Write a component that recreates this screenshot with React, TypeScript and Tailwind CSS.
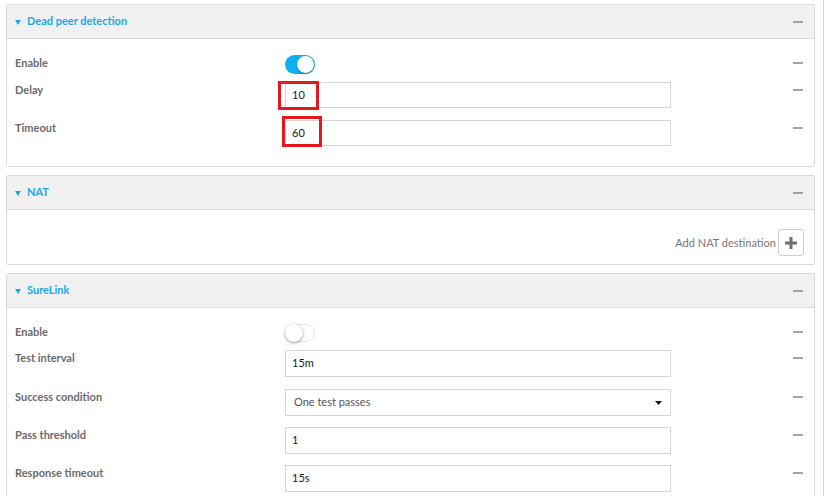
import React from "react";

const font = { fontFamily: "Lato, 'Noto Sans', 'Liberation Sans', sans-serif" };

function Minus() {
  return <div className="w-[10px] h-[2px] bg-[#a3a3a3]" />;
}

function Header({ title }: { title: string }) {
  return (
    <div className="h-[34px] bg-[#f1f1f1] border-b border-[#dadada] flex items-center pl-[8px] pr-[11px]">
      <svg width="6" height="5" viewBox="0 0 6 5" className="mt-[1px]">
        <polygon points="0,0 6,0 3,5" fill="#18a9e8" />
      </svg>
      <span className="ml-[6px] text-[11px] font-bold text-[#18a9e8]">{title}</span>
      <div className="flex-1" />
      <Minus />
    </div>
  );
}

function Row({
  label,
  children,
  h,
  mt,
}: {
  label: string;
  children: React.ReactNode;
  h: string;
  mt?: string;
}) {
  return (
    <div className={`flex items-start pl-[8px] pr-[11px] ${h} ${mt ?? ""}`}>
      <div className="w-[270px] text-[11px] leading-[16px] font-bold text-[#6b6b6b]">{label}</div>
      <div className="w-[386px] h-full relative">{children}</div>
      <div className="flex-1" />
      <div className="h-[16px] flex items-center">
        <Minus />
      </div>
    </div>
  );
}

function Input({ value }: { value: string }) {
  return (
    <div className="w-full h-full border border-[#d6d6d6] bg-white flex items-center pl-[6px] text-[11px] text-[#1a1a1a]">
      {value}
    </div>
  );
}

function ToggleOn() {
  return (
    <div className="w-[30px] h-[19px] rounded-full bg-[#0cb0f2] relative">
      <div className="absolute right-[1px] top-[1px] w-[17px] h-[17px] rounded-full bg-white shadow-[0_1px_2px_rgba(0,0,0,0.35)]" />
    </div>
  );
}

function ToggleOff() {
  return (
    <div className="w-[30px] h-[18px] rounded-full bg-white border border-[#e6e6e6] relative">
      <div className="absolute left-[-1px] top-[-1px] w-[18px] h-[18px] rounded-full bg-white shadow-[0_1px_3px_rgba(0,0,0,0.4)]" />
    </div>
  );
}

export default function App() {
  return (
    <div className="w-[829px] h-[496px] overflow-hidden bg-white flex" style={font}>
      <div className="w-[815px] pl-[6px] pt-[4px] flex flex-col">
        {/* Dead peer detection */}
        <div className="w-[809px] border border-[#d9d9d9] rounded-[2px] shrink-0">
          <Header title="Dead peer detection" />
          <div className="pt-[16px] pb-[20px]">
            <Row label="Enable" h="h-[19px]">
              <ToggleOn />
            </Row>
            <Row label="Delay" h="h-[26px]" mt="mt-[8px]">
              <Input value="10" />
              <div className="absolute left-[-7px] top-[-1px] w-[41px] h-[29px] border-[3px] border-[#e3191f]" />
            </Row>
            <Row label="Timeout" h="h-[26px]" mt="mt-[12px]">
              <Input value="60" />
              <div className="absolute left-[-3px] top-[-4px] w-[40px] h-[31px] border-[3px] border-[#e3191f]" />
            </Row>
          </div>
        </div>

        {/* NAT */}
        <div className="w-[809px] mt-[8px] border border-[#d9d9d9] rounded-[2px] shrink-0">
          <Header title="NAT" />
          <div className="h-[54px] flex items-start justify-end pt-[19px] pr-[10px]">
            <span className="text-[11px] text-[#777] leading-[27px] mr-[2px]">Add NAT destination</span>
            <div className="w-[26px] h-[27px] border border-[#cfcfcf] rounded-[3px] bg-white flex items-center justify-center">
              <svg width="12" height="12" viewBox="0 0 12 12">
                <rect x="4.5" y="0" width="3" height="12" fill="#707070" />
                <rect x="0" y="4.5" width="12" height="3" fill="#707070" />
              </svg>
            </div>
          </div>
        </div>

        {/* SureLink */}
        <div className="w-[809px] mt-[8px] border border-[#d9d9d9] rounded-[2px] shrink-0">
          <Header title="SureLink" />
          <div className="pt-[16px] pb-[19px]">
            <Row label="Enable" h="h-[18px]">
              <ToggleOff />
            </Row>
            <Row label="Test interval" h="h-[27px]" mt="mt-[8px]">
              <Input value="15m" />
            </Row>
            <Row label="Success condition" h="h-[27px]" mt="mt-[12px]">
              <div className="w-full h-full border border-[#d6d6d6] bg-white flex items-center pl-[8px] pr-[8px] text-[11px] text-[#555]">
                <span className="flex-1">One test passes</span>
                <svg width="7" height="4" viewBox="0 0 7 4">
                  <polygon points="0,0 7,0 3.5,4" fill="#111" />
                </svg>
              </div>
            </Row>
            <Row label="Pass threshold" h="h-[27px]" mt="mt-[11px]">
              <Input value="1" />
            </Row>
            <Row label="Response timeout" h="h-[27px]" mt="mt-[11px]">
              <Input value="15s" />
            </Row>
          </div>
        </div>
      </div>
      <div className="w-[8px]" />
      <div className="w-[6px] h-full border-l border-[#d4d4d4]" />
    </div>
  );
}
